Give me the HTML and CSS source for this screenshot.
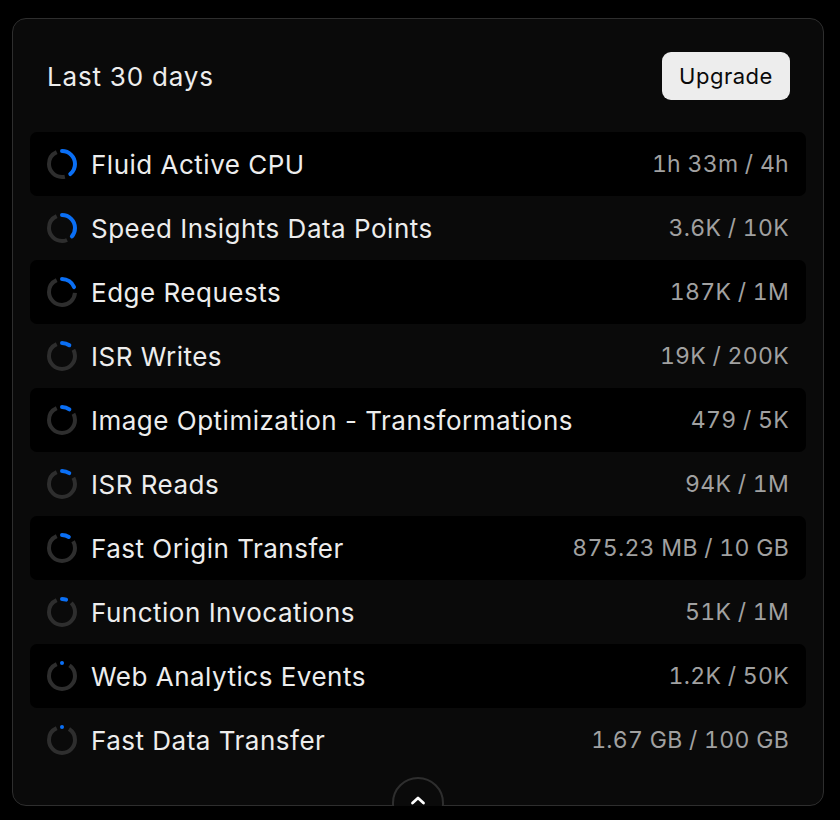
FILE: index.html
```html
<!DOCTYPE html>
<html lang="en">
<head>
<meta charset="utf-8">
<title>Usage</title>
<link rel="stylesheet" href="styles.css">
</head>
<body>
<section class="card">
  <header class="card-head">
    <h2 class="title">Last 30 days</h2>
    <button class="upgrade">Upgrade</button>
  </header>
  <ul class="rows">
    <li class="row">
      <svg class="ring" viewBox="0 0 32 32"><g transform="rotate(-90 16 16)"><circle class="track" cx="16" cy="16" r="13" stroke-dasharray="0 37.65 38.03 100"/><circle class="bar" cx="16" cy="16" r="13" stroke-dasharray="31.65 100"/></g></svg>
      <span class="label">Fluid Active CPU</span><span class="value">1h 33m / 4h</span>
    </li>
    <li class="row">
      <svg class="ring" viewBox="0 0 32 32"><g transform="rotate(-90 16 16)"><circle class="track" cx="16" cy="16" r="13" stroke-dasharray="0 35.4 40.28 100"/><circle class="bar" cx="16" cy="16" r="13" stroke-dasharray="29.4 100"/></g></svg>
      <span class="label">Speed Insights Data Points</span><span class="value">3.6K / 10K</span>
    </li>
    <li class="row">
      <svg class="ring" viewBox="0 0 32 32"><g transform="rotate(-90 16 16)"><circle class="track" cx="16" cy="16" r="13" stroke-dasharray="0 21.27 54.41 100"/><circle class="bar" cx="16" cy="16" r="13" stroke-dasharray="15.27 100"/></g></svg>
      <span class="label">Edge Requests</span><span class="value">187K / 1M</span>
    </li>
    <li class="row">
      <svg class="ring" viewBox="0 0 32 32"><g transform="rotate(-90 16 16)"><circle class="track" cx="16" cy="16" r="13" stroke-dasharray="0 13.76 61.92 100"/><circle class="bar" cx="16" cy="16" r="13" stroke-dasharray="7.76 100"/></g></svg>
      <span class="label">ISR Writes</span><span class="value">19K / 200K</span>
    </li>
    <li class="row">
      <svg class="ring" viewBox="0 0 32 32"><g transform="rotate(-90 16 16)"><circle class="track" cx="16" cy="16" r="13" stroke-dasharray="0 13.82 61.86 100"/><circle class="bar" cx="16" cy="16" r="13" stroke-dasharray="7.82 100"/></g></svg>
      <span class="label">Image Optimization - Transformations</span><span class="value">479 / 5K</span>
    </li>
    <li class="row">
      <svg class="ring" viewBox="0 0 32 32"><g transform="rotate(-90 16 16)"><circle class="track" cx="16" cy="16" r="13" stroke-dasharray="0 13.68 62 100"/><circle class="bar" cx="16" cy="16" r="13" stroke-dasharray="7.68 100"/></g></svg>
      <span class="label">ISR Reads</span><span class="value">94K / 1M</span>
    </li>
    <li class="row">
      <svg class="ring" viewBox="0 0 32 32"><g transform="rotate(-90 16 16)"><circle class="track" cx="16" cy="16" r="13" stroke-dasharray="0 13.15 62.53 100"/><circle class="bar" cx="16" cy="16" r="13" stroke-dasharray="7.15 100"/></g></svg>
      <span class="label">Fast Origin Transfer</span><span class="value">875.23 MB / 10 GB</span>
    </li>
    <li class="row">
      <svg class="ring" viewBox="0 0 32 32"><g transform="rotate(-90 16 16)"><circle class="track" cx="16" cy="16" r="13" stroke-dasharray="0 10.17 65.51 100"/><circle class="bar" cx="16" cy="16" r="13" stroke-dasharray="4.17 100"/></g></svg>
      <span class="label">Function Invocations</span><span class="value">51K / 1M</span>
    </li>
    <li class="row">
      <svg class="ring" viewBox="0 0 32 32"><g transform="rotate(-90 16 16)"><circle class="track" cx="16" cy="16" r="13" stroke-dasharray="0 7.96 67.72 100"/><circle class="bar" cx="16" cy="16" r="13" stroke-dasharray="0.01 100"/></g></svg>
      <span class="label">Web Analytics Events</span><span class="value">1.2K / 50K</span>
    </li>
    <li class="row">
      <svg class="ring" viewBox="0 0 32 32"><g transform="rotate(-90 16 16)"><circle class="track" cx="16" cy="16" r="13" stroke-dasharray="0 7.36 68.32 100"/><circle class="bar" cx="16" cy="16" r="13" stroke-dasharray="0.01 100"/></g></svg>
      <span class="label">Fast Data Transfer</span><span class="value">1.67 GB / 100 GB</span>
    </li>
  </ul>
  <button class="toggle" aria-label="Collapse">
    <svg class="chev" viewBox="0 0 20 20" width="20" height="20"><path d="M4.5 12 10 7l5.5 5" fill="none" stroke="#ffffff" stroke-width="2.8" stroke-linecap="round" stroke-linejoin="round"/></svg>
  </button>
</section>
</body>
</html>
```
FILE: styles.css
```css
html, body {
  margin: 0;
  padding: 0;
  background: #000;
  font-family: Inter, "Noto Sans", "Liberation Sans", sans-serif;
}

.card {
  position: relative;
  box-sizing: border-box;
  width: 812px;
  margin: 18px 0 0 12px;
  background: #0a0a0a;
  border: 1px solid #2e2e2e;
  border-radius: 14px;
  padding: 33px 17px 33px 17px;
}

.card-head {
  display: flex;
  align-items: center;
  justify-content: space-between;
  height: 48px;
  padding: 0 16px 0 17px;
}

.title {
  margin: 0;
  font-size: 26px;
  font-weight: 400;
  color: #ededed;
  letter-spacing: 0.8px;
}

.upgrade {
  height: 48px;
  width: 128px;
  border: none;
  border-radius: 9px;
  background: #ededed;
  color: #0a0a0a;
  font-family: inherit;
  font-size: 22px;
  font-weight: 400;
  letter-spacing: 0.5px;
  padding: 0;
}

.rows {
  list-style: none;
  margin: 32px 0 0 0;
  padding: 0;
}

.row {
  display: flex;
  align-items: center;
  height: 64px;
  padding: 0 17px 0 16px;
  border-radius: 7px;
}

.row:nth-child(odd) {
  background: #000;
}

.ring {
  width: 32px;
  height: 32px;
  flex: none;
  margin-right: 13px;
}

.ring circle {
  fill: none;
  stroke-width: 4;
}

.ring .track {
  stroke: #2e2e2e;
}

.ring .bar {
  stroke: #0a6ff5;
  stroke-linecap: round;
}

.label {
  flex: 1;
  font-size: 26px;
  color: #ededed;
  letter-spacing: 0.5px;
}

.value {
  font-size: 23px;
  color: #a1a1a1;
  font-variant-numeric: tabular-nums;
  letter-spacing: 0.3px;
}

.toggle {
  position: absolute;
  z-index: 2;
  left: 50%;
  top: 100%;
  margin-top: -28px;
  transform: translateX(-50%);
  box-sizing: border-box;
  width: 52px;
  height: 52px;
  border-radius: 50%;
  border: 2px solid #2e2e2e;
  background: #0a0a0a;
  display: flex;
  align-items: center;
  justify-content: center;
  padding: 0 0 4px 0;
}

.chev {
  display: block;
}
```
